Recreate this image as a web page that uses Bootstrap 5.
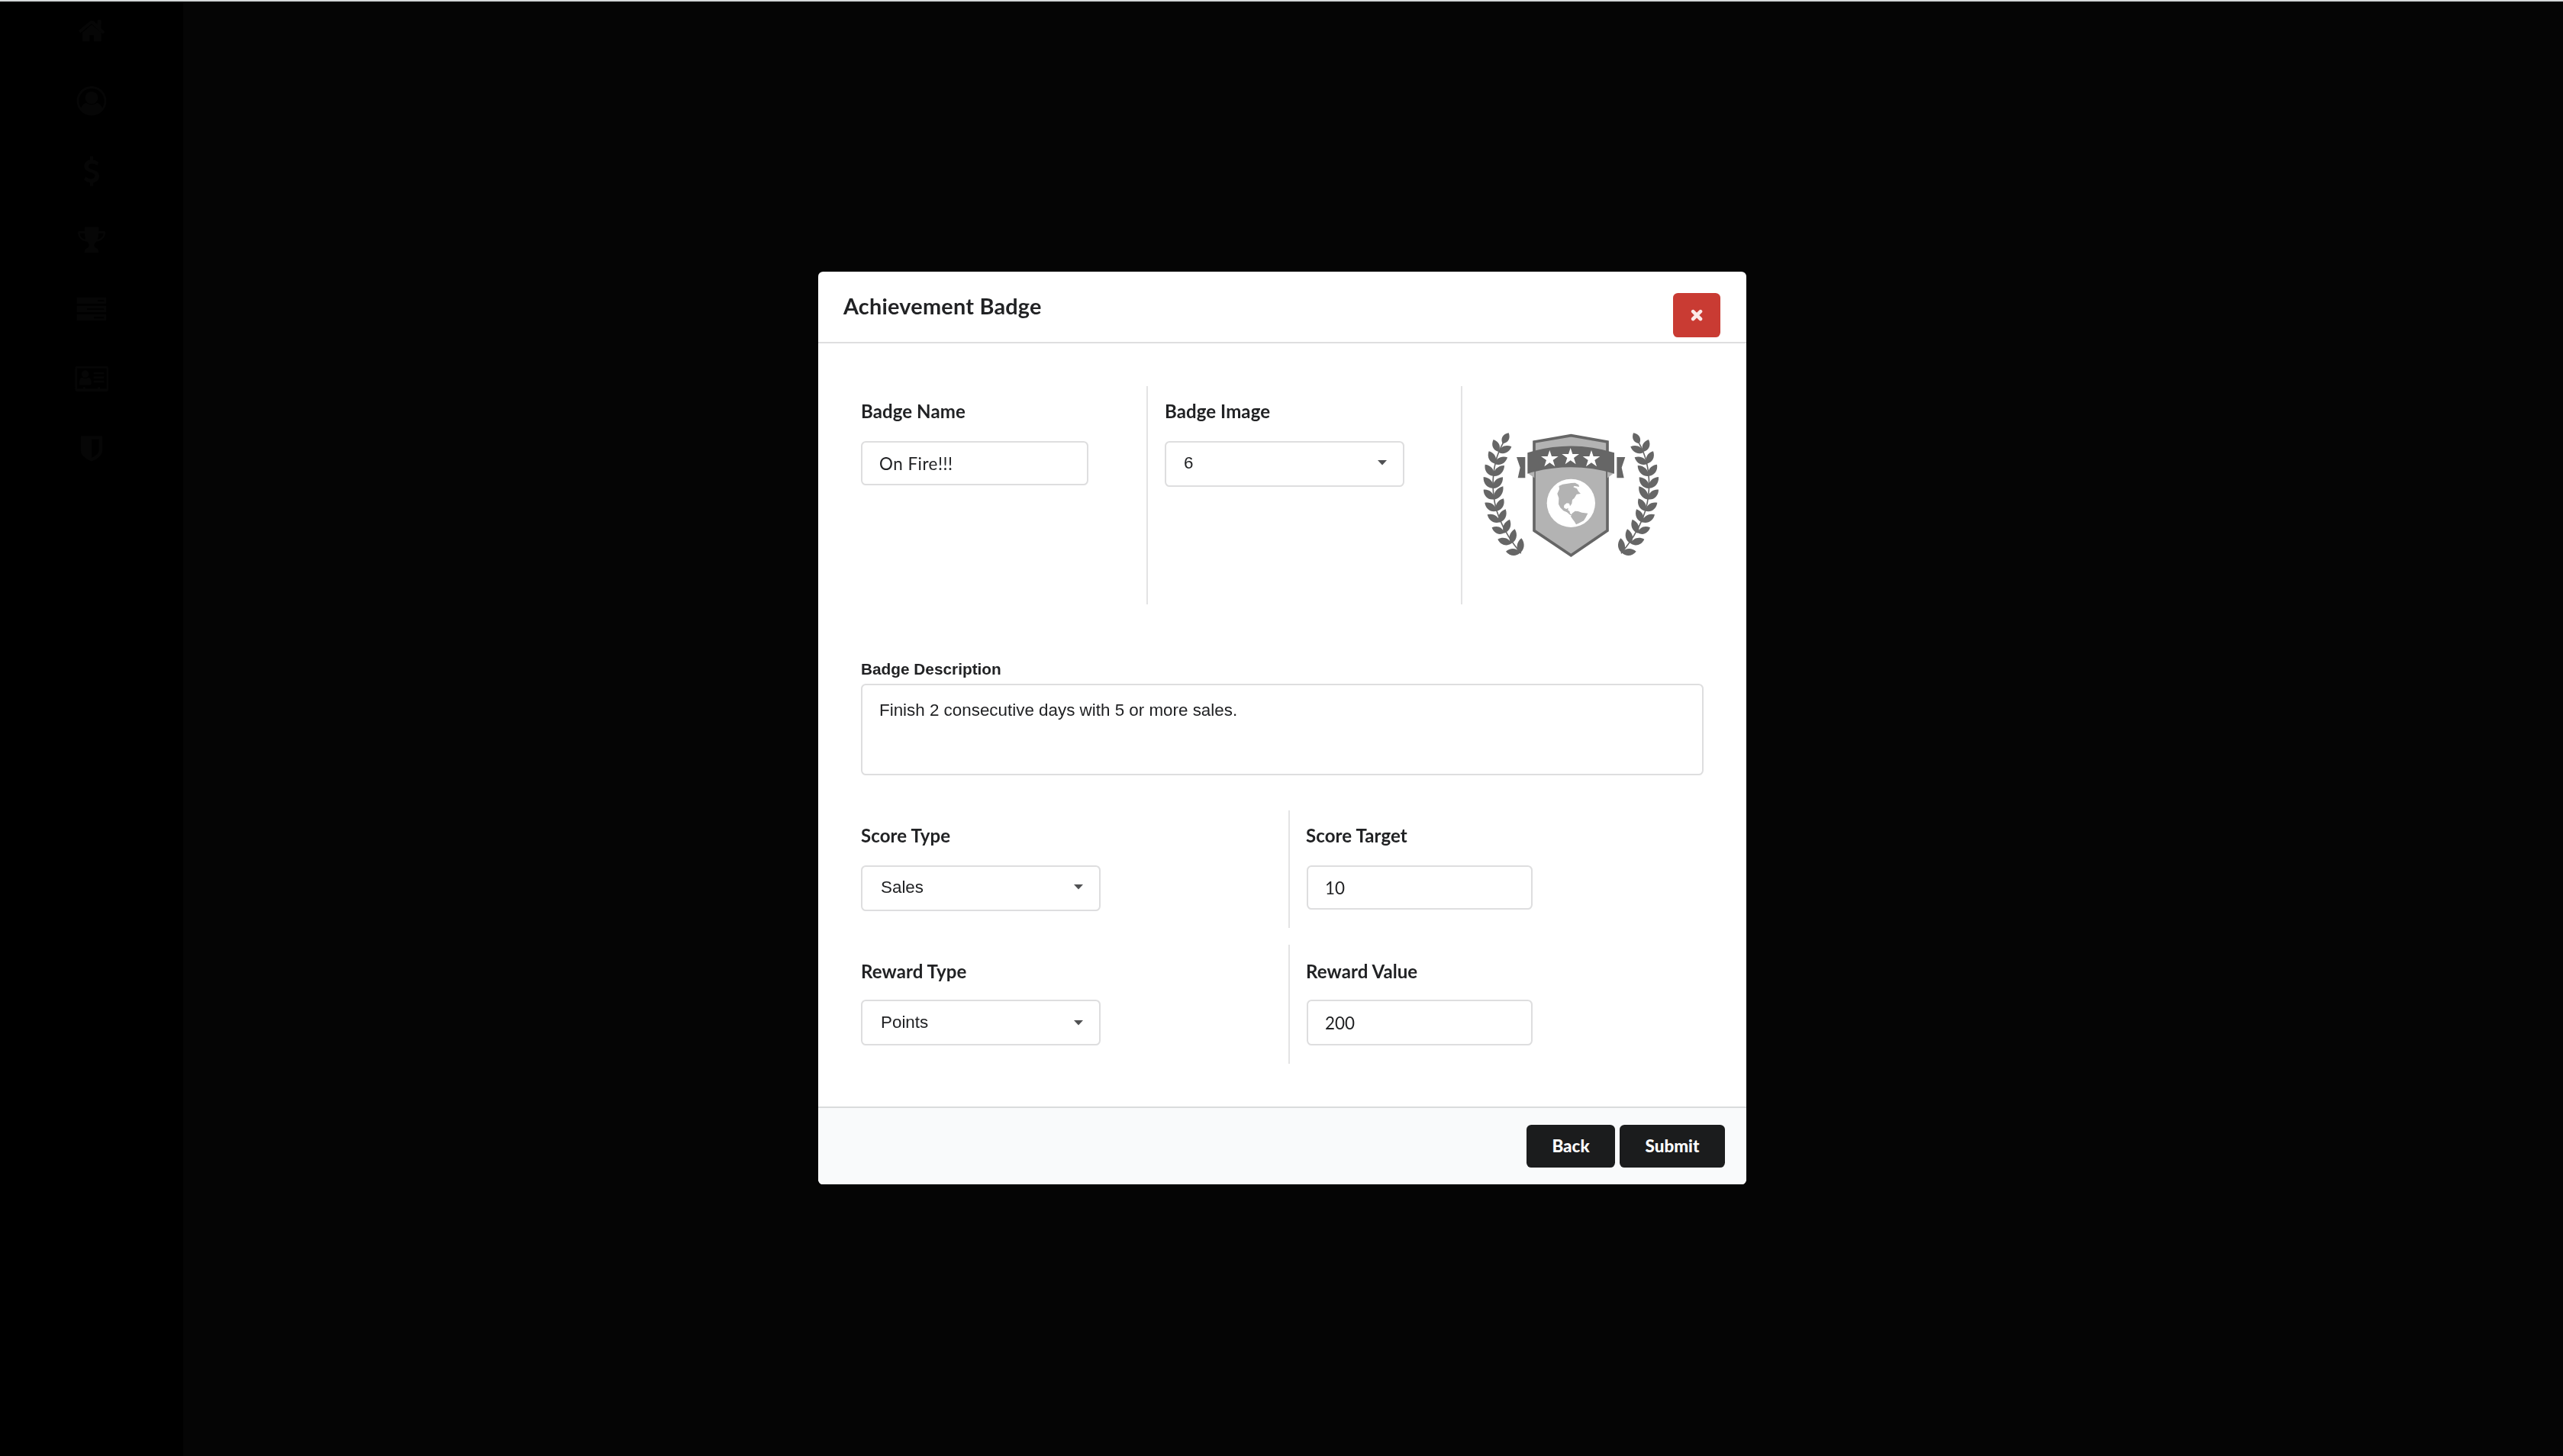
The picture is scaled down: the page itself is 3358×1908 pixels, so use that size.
<!DOCTYPE html>
<html lang="en">
<head>
<meta charset="utf-8">
<meta name="viewport" content="width=device-width, initial-scale=1">
<title>Achievement Badge</title>
<link href="https://cdn.jsdelivr.net/npm/bootstrap@5.3.0/dist/css/bootstrap.min.css" rel="stylesheet">
<style>
  body { font-family: Lato, sans-serif; font-size: 22.4px; color: #212224; background: #050505; min-height: 1908px; overflow: hidden; }
  .page-shell { height: 1908px; border-top: 2px solid #d4d8d9; }
  .side-rail { width: 240px; background: #000; }
  .side-rail svg { display: block; fill: #060606; }
  .badge-modal { padding: 356px 0 0 1072px !important; }
  .badge-modal .modal-dialog { width: 1216px; max-width: none; margin: 0; }
  .badge-modal .modal-content { border: 0; border-radius: 6.4px; color: #212224; }
  .badge-modal .modal-header { height: 94px; padding: 0 34px 0 33px; border-bottom: 2px solid #dededf; border-radius: 0; }
  .badge-modal .modal-title { font-size: 28.8px; letter-spacing: .25px; line-height: 36px; font-weight: 700; margin-top: 27px; }
  .btn-shut { width: 62px; height: 58px; margin-top: 28px; background: #c93b33; border-radius: 6.4px; }
  .badge-modal .modal-body { padding: 56px; }
  .badge-modal .modal-footer { height: 102px; padding: 22px 28px 0 0; gap: 6px; background: #f9fafb; border-top: 2px solid #d9dbdc; border-radius: 0 0 6.4px 6.4px; }
  .modal-footer > .btn-ink { margin: 0; height: 56px; padding: 0; background: #1b1c1d; color: #fff; font-size: 22.4px; font-weight: 900; border: 0; border-radius: 6.4px; line-height: 56px; }
  .btn-back { width: 116px; } .btn-submit { width: 138px; }
  .field-title { font-size: 24px; letter-spacing: .1px; line-height: 31px; font-weight: 700; margin: 0; }
  .cell-line { border-left: 2px solid #e3e3e4; padding-left: 22px; }
  .top-row { height: 286px; } .top-row > * { padding-top: 17px; }
  .score-row { height: 154px; margin-top: 46px; } .score-row > * { padding-top: 17px; }
  .reward-row { height: 156px; margin-top: 22px; } .reward-row > * { padding-top: 19px; }
  .reward-row .field-title { margin-bottom: 22px; }
  .score-row .field-title, .top-row .field-title { margin-bottom: 24px; }
  .score-row .cell-line .field-title, .reward-row .cell-line .field-title { margin-left: -1px; }
  .col-name { width: 374px; } .col-image { width: 412px; } .col-half { width: 560px; }
  .form-control.box, .pick { border: 2px solid #dededf; border-radius: 6.4px; background: #fff; font-size: 22.4px; color: #212224; }
  .form-control.box { width: 298px; height: 58px; padding: 0 22px; line-height: 28px; }
  .col-name .form-control.box { letter-spacing: .5px; }
  .form-control.slim { width: 296px; }
  .reward-row .form-control.box { height: 60px; }
  .pick { width: 314px; height: 60px; padding: 0 21px 3px 24px; font-family: "Liberation Sans", sans-serif; line-height: 28px; }
  .top-row .pick { padding-left: 23px; }
  .reward-row .pick { padding-bottom: 0; }
  .desc-title { font: 700 20.8px/24px "Liberation Sans", sans-serif; margin: 73px 0 7px; display: block; }
  .form-control.desc { width: 1104px; height: 120px; padding: 18px 22px; font-family: "Liberation Sans", sans-serif; font-size: 22.4px; line-height: 29px; border: 2px solid #dededf; border-radius: 6.4px; color: #212224; resize: none; display: block; }
  .badge-art { padding: 34px 0 0 4px !important; }
</style>
<script src="https://cdn.jsdelivr.net/npm/bootstrap@5.3.0/dist/js/bootstrap.bundle.min.js"></script>
</head>
<body>
<div class="page-shell d-flex">
  <nav class="side-rail" aria-label="Main">
    <svg width="240" height="638" viewBox="0 5 720 1563" preserveAspectRatio="none">
      <!-- home -->
      <path d="M311 97 352 69q9-6 18 0l13 9V67q0-3 3-3h9q3 0 3 3v25l12 8q2 2 0 4l-4 4q-2 1-4 0L360 76l-42 29q-3 1-4-1l-4-4q-1-2 1-3zM324 105l36-26 38 26v25q0 3-3 3h-26v-20h-17v20h-25q-3 0-3-3z"/>
      <!-- account -->
      <path fill-rule="evenodd" d="M360 277c32 0 58 21 58 47s-26 47-58 47-58-21-58-47 26-47 58-47zm0 7c-28 0-50 18-50 40 0 9 3 16 9 23 4-10 11-16 21-16 11 7 29 7 40 0 10 0 17 6 22 16 5-7 8-14 8-23 0-22-22-40-50-40z"/><ellipse cx="360" cy="314" rx="25" ry="20"/>
      <!-- sales -->
      <path d="M354 502h12v11q12 2 22 8l-6 10c-14-8-34-8-34 3 0 15 42 7 42 31 0 13-11 20-24 22v10h-12v-10q-14-2-24-10l7-10c14 11 36 9 36-2 0-16-42-9-42-31 0-11 10-19 23-21z"/>
      <!-- trophy -->
      <path fill-rule="evenodd" d="M333 729h55v13h21q5 0 5 5c0 16-17 27-36 29-10 8-10 16 0 20q10 3 10 15h-56q0-12 11-15c9-4 9-12 0-20-19-2-37-13-37-29q0-5 5-5h22zm0 20h-19c0 10 9 18 22 20q-3-9-3-20zm54 0q0 11-4 20c14-2 23-10 24-20z"/>
      <!-- records -->
      <path fill-rule="evenodd" d="M302 955h115v20H302zM384 963v5h25v-5zM302 982h115v20H302zM342 990v5h67v-5zM302 1009h115v20H302zM369 1017v5h40v-5z"/>
      <!-- id card -->
      <path fill-rule="evenodd" d="M301 1176h119q6 0 6 6v69q0 6-6 6H301q-6 0-6-6v-69q0-6 6-6zm2 7v65h24v-5h8v5h50v-5h8v5h26v-65z"/><ellipse cx="335" cy="1201" rx="14" ry="12"/><path d="M312 1236v-12q2-12 11-12 12 7 25 0 9 0 11 12v8q0 4-4 4zM368 1195h41v6h-41zM368 1209h41v6h-41zM368 1222h41v6h-41z"/>
      <!-- shield -->
      <path fill-rule="evenodd" d="M318 1400h84v48c0 17-26 28-42 33-16-5-42-16-42-33zm42 10v60c13-5 29-14 29-25v-35z"/>
    </svg>
  </nav>
  <main class="flex-grow-1"></main>
</div>

<div class="modal badge-modal show d-block" tabindex="-1" role="dialog">
  <div class="modal-dialog">
    <div class="modal-content">
      <div class="modal-header align-items-start justify-content-between">
        <h1 class="modal-title">Achievement Badge</h1>
        <button class="btn btn-shut p-0 border-0 d-flex align-items-center justify-content-center" type="button" aria-label="Close">
          <svg width="16" height="16" viewBox="0 0 16 16"><path d="M3.2 3.2l9.8 9.8M13 3.2L3.2 13" stroke="#fbe9e8" stroke-width="4.6" stroke-linecap="round"/></svg>
        </button>
      </div>
      <div class="modal-body">
        <div class="top-row d-flex">
          <div class="col-name">
            <h4 class="field-title">Badge Name</h4>
            <input class="form-control box" type="text" value="On Fire!!!">
          </div>
          <div class="col-image cell-line">
            <h4 class="field-title">Badge Image</h4>
            <div class="pick d-flex align-items-center justify-content-between"><span>6</span><svg width="12" height="7" viewBox="0 0 12 7"><path d="M0 0h12L6 6.5z" fill="#505153"/></svg></div>
          </div>
          <div class="cell-line badge-art">
            <svg width="280" height="210" viewBox="0 0 840 630" id="art">
              <path d="M270 117 415 92 558 117V466L415 563 270 466z" fill="#b3b3b3" stroke="#666" stroke-width="11"/>
              <path d="M245 240l26-9v28zM584 240l-26-9v28z" fill="#b3b3b3"/>
              <path d="M201 177h34v82h-29l9-41zM628 177h-33v82h28l-9-41z" fill="#666"/>
              <path d="M244 160Q415 107 585 160V242Q415 192 244 242z" fill="#666"/>
              <g fill="#fff">
                <path id="star" d="M331 150l8 24h26l-21 15 8 25-21-15-21 15 8-25-21-15h26z"/>
                <use href="#star" x="82" y="-9"/><use href="#star" x="164"/>
              </g>
              <circle cx="415" cy="358" r="95" fill="#fff"/>
              <path fill="#b3b3b3" d="M367 291l15-7 34-5 15-1 14 8 2 8-19-4-4 5 14 6 6 11 9 9-16 2-9 15-8 7-2 15-7 10-3-11-10-1-10 8-1 10 9 5 8-4-1 9 6 3 2 9 7 6-6 1-13-11-14-6-12-12-7-14 1-24-6-17 8-18-1-8zM419 398l12-9 12 1 14 5 24 3-8 16-8 13-20 10-10 5-6-11-7-9-8-12z"/>
            </svg>
          </div>
        </div>
        <label class="desc-title" for="desc">Badge Description</label>
        <textarea class="form-control desc" id="desc">Finish 2 consecutive days with 5 or more sales.</textarea>
        <div class="score-row d-flex">
          <div class="col-half">
            <h4 class="field-title">Score Type</h4>
            <div class="pick d-flex align-items-center justify-content-between"><span>Sales</span><svg width="12" height="7" viewBox="0 0 12 7"><path d="M0 0h12L6 6.5z" fill="#505153"/></svg></div>
          </div>
          <div class="cell-line">
            <h4 class="field-title">Score Target</h4>
            <input class="form-control box slim" type="text" value="10">
          </div>
        </div>
        <div class="reward-row d-flex">
          <div class="col-half">
            <h4 class="field-title">Reward Type</h4>
            <div class="pick d-flex align-items-center justify-content-between"><span>Points</span><svg width="12" height="7" viewBox="0 0 12 7"><path d="M0 0h12L6 6.5z" fill="#505153"/></svg></div>
          </div>
          <div class="cell-line">
            <h4 class="field-title">Reward Value</h4>
            <input class="form-control box slim" type="text" value="200">
          </div>
        </div>
      </div>
      <div class="modal-footer align-items-start justify-content-end">
        <button class="btn btn-ink btn-back" type="button">Back</button>
        <button class="btn btn-ink btn-submit" type="button">Submit</button>
      </div>
    </div>
  </div>
</div>
<script>
  // Laurel branches: each leaf is [tipX, tipY, baseX, baseY]; the right branch mirrors the left.
  const leaves = [[170,82,146,124],[110,108,130,156],[92,154,117,203],[77,206,111,251],[71,255,109,299],[71,305,112,343],[76,356,122,389],[86,403,135,433],[104,454,152,475],[127,500,180,517],[159,548,215,553],
    [181,136,130,158],[165,178,115,204],[153,210,110,252],[147,256,108,300],[148,292,112,344],[150,340,122,389],[158,382,133,434],[174,422,152,476],[194,460,180,517],[220,496,213,555]];
  let d = '';
  for (const [tx, ty, bx, by] of leaves) {
    const dx = tx - bx, dy = ty - by, n = Math.hypot(dx, dy), px = -dy / n * 18, py = dx / n * 18;
    const p = (t, s) => `${(bx + dx * t + px * s).toFixed(1)} ${(by + dy * t + py * s).toFixed(1)}`;
    d += `M${bx} ${by}C${p(.25, 1)} ${p(.7, 1)} ${tx} ${ty}C${p(.7, -1)} ${p(.25, -1)} ${bx} ${by}z`;
  }
  const branch = `<path d="${d}" fill="#666"/><path d="M150 118C122 165 108 225 108 290 110 380 140 460 218 556" fill="none" stroke="#666" stroke-width="5"/>`;
  document.getElementById('art').insertAdjacentHTML('beforeend', `<g>${branch}</g><g transform="translate(830) scale(-1 1)">${branch}</g>`);
</script>
</body>
</html>
